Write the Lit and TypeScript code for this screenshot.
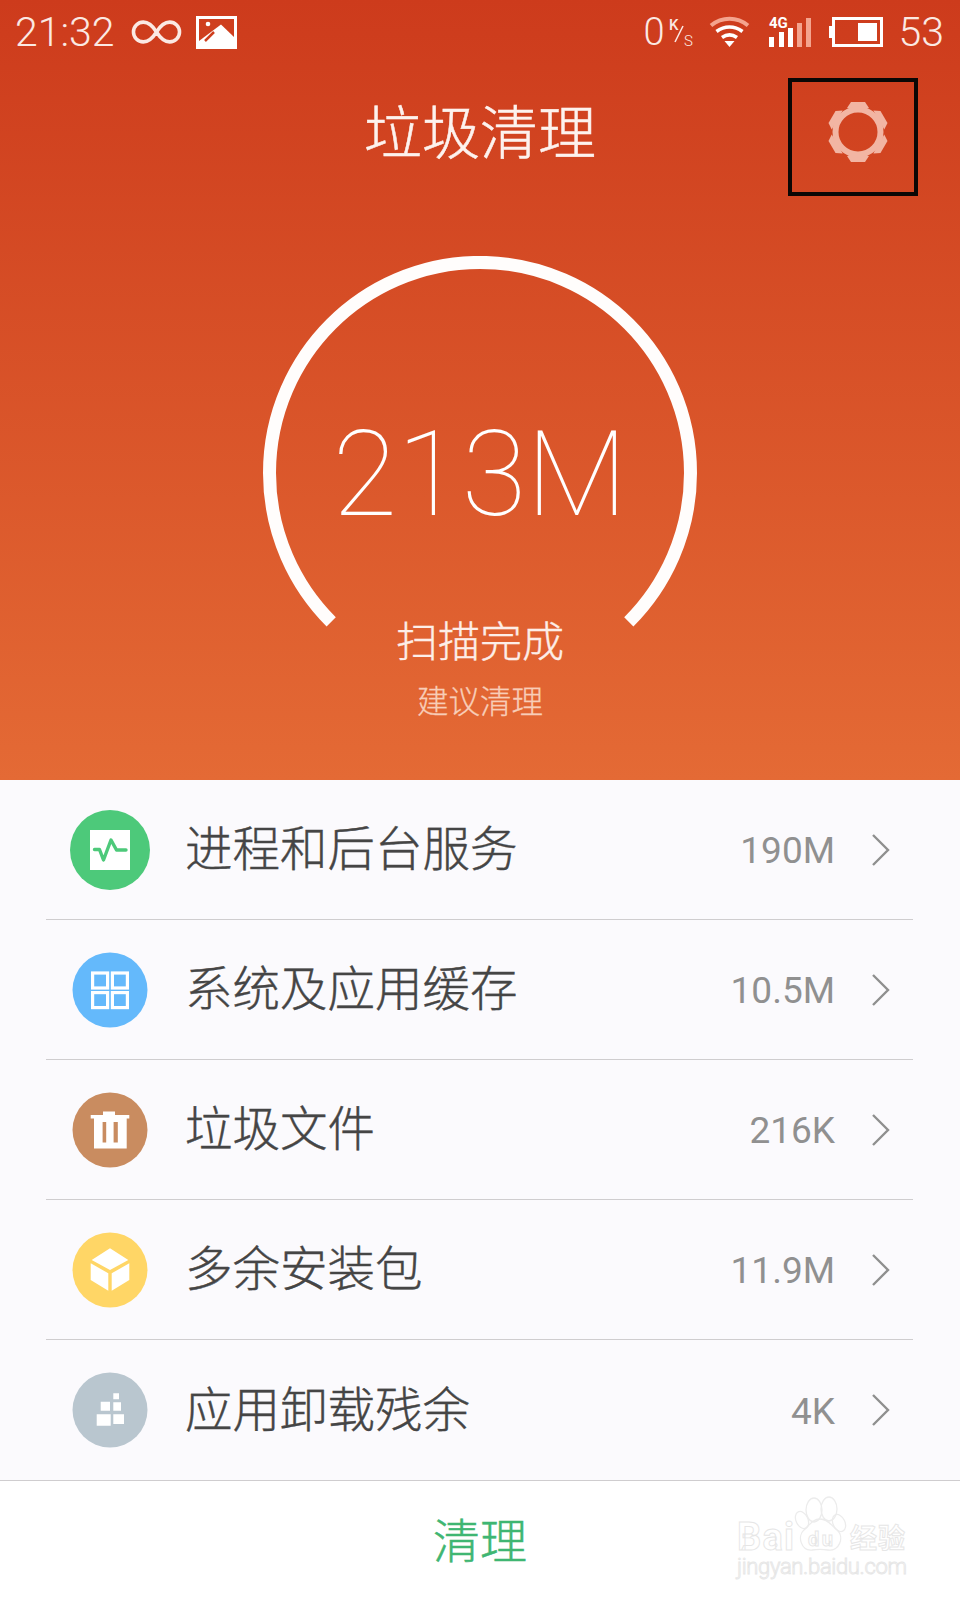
import { LitElement, html, css, svg } from 'lit';
import { customElement } from 'lit/decorators.js';

const icons = {
  process: svg`
    <circle cx="40" cy="40" r="40" fill="#4dc97a"></circle>
    <rect x="20" y="20" width="40" height="40" fill="#fff"></rect>
    <path d="M24.5 39.5h5L33.5 50 41 30l5.5 10H56" fill="none" stroke="#4dc97a" stroke-width="3.4" stroke-linecap="round" stroke-linejoin="round"></path>`,
  cache: svg`
    <circle cx="40" cy="40" r="37.5" fill="#64b9fb"></circle>
    <g fill="none" stroke="#fff" stroke-width="3.2">
      <rect x="22.6" y="23" width="15" height="15"></rect>
      <rect x="42.4" y="23" width="15" height="15"></rect>
      <rect x="22.6" y="42.6" width="15" height="15"></rect>
      <rect x="42.4" y="42.6" width="15" height="15"></rect>
    </g>`,
  trash: svg`
    <circle cx="40" cy="40" r="37.5" fill="#c98c60"></circle>
    <path d="M33 25v-3.5h12V25h14.3v3.5h-2.6v30H24v-30h-3.3V25z" fill="#fff"></path>
    <rect x="32.6" y="32" width="3.6" height="20.5" fill="#c98c60"></rect>
    <rect x="43.6" y="32" width="4.2" height="20.5" fill="#c98c60"></rect>`,
  package: svg`
    <circle cx="40" cy="40" r="37.5" fill="#ffd666"></circle>
    <path d="M40 18.3 58.3 30 40 40 21.7 30zM20.7 33.3l17.6 10v17.4L20.7 50zM41.7 43.3l17.6-10V50L41.7 60.7z" fill="#fff"></path>`,
  residue: svg`
    <circle cx="40" cy="40" r="37.5" fill="#b9c6cf"></circle>
    <path d="M26.7 44.2h14v11.6h-14zM43.3 44.2H54V54H43.3zM30.7 31.8H40v9h-9.3zM43.3 32.3H51v8.4h-7.7zM43.3 23.3H49v6h-5.7z" fill="#fff"></path>`,
};

const rows = [
  { icon: icons.process, name: '进程和后台服务', size: '190M' },
  { icon: icons.cache, name: '系统及应用缓存', size: '10.5M' },
  { icon: icons.trash, name: '垃圾文件', size: '216K' },
  { icon: icons.package, name: '多余安装包', size: '11.9M' },
  { icon: icons.residue, name: '应用卸载残余', size: '4K' },
];

@customElement('app-root')
class AppRoot extends LitElement {
  static styles = css`
    :host {
      display: block;
      width: 960px;
      height: 1600px;
      position: relative;
      overflow: hidden;
      background: #fff;
      font-family: Roboto, "Noto Sans CJK SC", sans-serif;
      font-weight: 300;
    }
    .top {
      height: 780px;
      display: flex;
      flex-direction: column;
      background: linear-gradient(180deg, #cd3b1c 0%, #e46a35 100%);
      color: #fff;
    }
    .status {
      height: 62px;
      display: flex;
      align-items: center;
      padding: 2px 16px 0 15px;
      box-sizing: border-box;
      font-size: 41px;
      color: #fbe9e3;
    }
    .status svg {
      display: block;
      flex: none;
      overflow: visible;
    }
    .time {
      margin-right: 18px;
    }
    .infinity {
      margin-right: 16px;
    }
    .spacer {
      flex: 1;
    }
    .speed {
      font-size: 38px;
      margin-right: 4px;
    }
    .wifi {
      margin-left: 14px;
    }
    .signal {
      margin-left: 19px;
    }
    .battery {
      margin-left: 17px;
    }
    .level {
      margin-left: 16px;
    }
    .nav {
      height: 142px;
      position: relative;
      display: flex;
      align-items: center;
      justify-content: center;
      padding-bottom: 8px;
      box-sizing: border-box;
      font-size: 58px;
      color: #fdf2ee;
      -webkit-text-stroke: 0.5px currentColor;
    }
    .mark {
      position: absolute;
      left: 788px;
      top: 16px;
      width: 130px;
      height: 118px;
      box-sizing: border-box;
      border: 4px solid #0b0705;
      padding: 0 0 10px 10px;
      display: flex;
      align-items: center;
      justify-content: center;
    }
    .gauge {
      display: grid;
      justify-content: center;
      margin-top: 52px;
    }
    .gauge > * {
      grid-area: 1 / 1;
    }
    .readout {
      display: flex;
      flex-direction: column;
      align-items: center;
      padding-top: 154px;
    }
    .amount {
      font-size: 118px;
      line-height: 130px;
      font-weight: 100;
    }
    .state {
      margin-top: 78px;
      font-size: 42px;
      line-height: 50px;
      color: #fdeee8;
      -webkit-text-stroke: 0.4px currentColor;
    }
    .advice {
      margin-top: 15px;
      font-size: 31.5px;
      line-height: 40px;
      color: #f8cdb8;
      -webkit-text-stroke: 0.3px currentColor;
    }
    .list {
      height: 700px;
      background: #fbfafd;
      border-bottom: 1px solid #cfcdcf;
      padding: 0 47px 0 46px;
    }
    .row {
      height: 140px;
      box-sizing: border-box;
      display: flex;
      align-items: center;
      padding: 0 22px 0 24px;
      border-bottom: 1px solid #cfcdcf;
    }
    .row:last-child {
      border-bottom: none;
    }
    .row > svg {
      display: block;
      flex: none;
    }
    .name {
      flex: 1;
      margin-left: 35px;
      padding-bottom: 8px;
      font-size: 47.5px;
      color: #454545;
      -webkit-text-stroke: 0.4px currentColor;
    }
    .size {
      font-size: 37px;
      font-weight: 400;
      color: #909090;
      margin-right: 36px;
      padding-top: 2px;
    }
    .bottom {
      height: 119px;
      display: flex;
      align-items: center;
      justify-content: center;
      padding-bottom: 6px;
      box-sizing: border-box;
      font-size: 47px;
      color: #3fb672;
      -webkit-text-stroke: 0.5px currentColor;
    }
    .watermark {
      position: absolute;
      left: 730px;
      top: 1490px;
      overflow: visible;
    }
  `;

  private gear() {
    return html`<svg width="62" height="62" viewBox="-31 -31 62 62" fill="#f2b5a3">
      ${[0, 60, 120, 180, 240, 300].map(
        (a) => svg`<path transform="rotate(${a})" d="M-7 -30H7L11 -24H-11z"></path>`
      )}
      <circle r="22.5" fill="none" stroke="#f2b5a3" stroke-width="6"></circle>
    </svg>`;
  }

  private watermark() {
    return html`<svg class="watermark" width="180" height="100" viewBox="730 1490 180 100">
      <g fill="none" stroke="#ececec" stroke-width="1.3">
        <ellipse cx="814" cy="1510" rx="8" ry="12"></ellipse>
        <ellipse cx="829" cy="1509" rx="8" ry="12"></ellipse>
        <ellipse cx="802" cy="1520" rx="6" ry="9" transform="rotate(-25 802 1520)"></ellipse>
        <ellipse cx="839" cy="1523" rx="6" ry="9" transform="rotate(-25 839 1523)"></ellipse>
        <path d="M820 1519c-8 0-11 7-16 11-7 6-3 21 8 20 6-1 10-1 16 0 11 2 17-13 9-20-5-4-9-11-17-11z"></path>
      </g>
      <g font-family="Roboto, 'Noto Sans CJK SC', sans-serif" fill="#fff" stroke="#e6e6e6" stroke-width="0.9">
        <text x="737" y="1550" font-size="38" font-weight="700" textLength="57">Bai</text>
        <text x="808" y="1546" font-size="20" font-weight="700" textLength="25">du</text>
        <text x="850" y="1548" font-size="27" font-weight="700" textLength="55">经验</text>
        <text x="737" y="1574" font-size="22" textLength="170">jingyan.baidu.com</text>
      </g>
    </svg>`;
  }

  render() {
    return html`
      <section class="top">
        <div class="status">
          <span class="time">21:32</span>
          <svg class="infinity" width="47" height="26" viewBox="0 0 50 26">
            <path d="M25 13C20 5 16 2.5 11 2.5a10.500 10.500 0 0 0 0 21C16 23.500 20 21 25 13S34 2.500 39 2.500a10.500 10.500 0 0 1 0 21C34 23.500 30 21 25 13z" fill="none" stroke="#fbe9e3" stroke-width="3.800"></path>
          </svg>
          <svg width="41" height="33" viewBox="0 0 41 33">
            <rect width="41" height="33" fill="#fff"></rect>
            <rect x="3" y="3" width="35" height="22" fill="#cf3f1e"></rect>
            <path d="M3 25 25 8.500 38 21v6H3z" fill="#fff"></path>
            <circle cx="12" cy="8" r="2.300" fill="#fff"></circle>
            <path d="M9 25 18 16" stroke="#cf3f1e" stroke-width="2.500"></path>
          </svg>
          <span class="spacer"></span>
          <span class="speed">0</span>
          <svg width="26" height="30" viewBox="0 0 26 30">
            <g font-family="Roboto, sans-serif" font-size="15" fill="#fbe9e3">
              <text x="0" y="13" font-weight="500">K</text>
              <text x="15" y="29">S</text>
            </g>
            <path d="M14 9 6 25" stroke="#fbe9e3" stroke-width="1.500"></path>
          </svg>
          <svg class="wifi" width="41" height="32" viewBox="0 0 41 32" fill="none">
            <path d="M2 9.500C13 .500 28 .500 39 9.500" stroke="#f4a48e" stroke-width="4"></path>
            <path d="M7.500 15.500c8-6 18-6 26 0" stroke="#fff" stroke-width="3.600"></path>
            <path d="M13 21.500c5-3.500 10-3.500 15 0" stroke="#fff" stroke-width="3.600"></path>
            <path d="M15.500 25h10l-5 6z" fill="#fff"></path>
          </svg>
          <svg class="signal" width="43" height="32" viewBox="0 0 43 32">
            <text x="0" y="12" font-family="Roboto, sans-serif" font-size="15" font-weight="700" fill="#fff">4G</text>
            <rect x="0" y="21" width="5" height="10" fill="#fff"></rect>
            <rect x="10" y="16" width="5" height="15" fill="#fff"></rect>
            <rect x="19" y="12" width="5" height="19" fill="#fff"></rect>
            <rect x="28" y="7" width="5" height="24" fill="#f4a48e"></rect>
            <rect x="37" y="2" width="5" height="29" fill="#f4a48e"></rect>
          </svg>
          <svg class="battery" width="54" height="30" viewBox="0 0 54 30">
            <rect x="0" y="9" width="3" height="12" fill="#fff"></rect>
            <rect x="4.500" y="1.500" width="48" height="27" fill="none" stroke="#fff" stroke-width="3"></rect>
            <rect x="29" y="6" width="19" height="18" fill="#fff"></rect>
          </svg>
          <span class="level">53</span>
        </div>
        <div class="nav">
          <span>垃圾清理</span>
          <div class="mark">${this.gear()}</div>
        </div>
        <div class="gauge">
          <svg width="434" height="434" viewBox="0 0 434 434">
            <path d="M68.200 365.800A210.500 210.500 0 1 1 365.800 365.800" fill="none" stroke="#fffdfc" stroke-width="13"></path>
          </svg>
          <div class="readout">
            <div class="amount">213M</div>
            <div class="state">扫描完成</div>
            <div class="advice">建议清理</div>
          </div>
        </div>
      </section>
      <section class="list">
        ${rows.map(
          (r) => html`<div class="row">
            <svg width="80" height="80" viewBox="0 0 80 80">${r.icon}</svg>
            <span class="name">${r.name}</span>
            <span class="size">${r.size}</span>
            <svg width="20" height="34" viewBox="0 0 20 34">
              <path d="M2 2 17 17 2 32" fill="none" stroke="#8f8f8f" stroke-width="2.400"></path>
            </svg>
          </div>`
        )}
      </section>
      <footer class="bottom">清理</footer>
      ${this.watermark()}
    `;
  }
}
